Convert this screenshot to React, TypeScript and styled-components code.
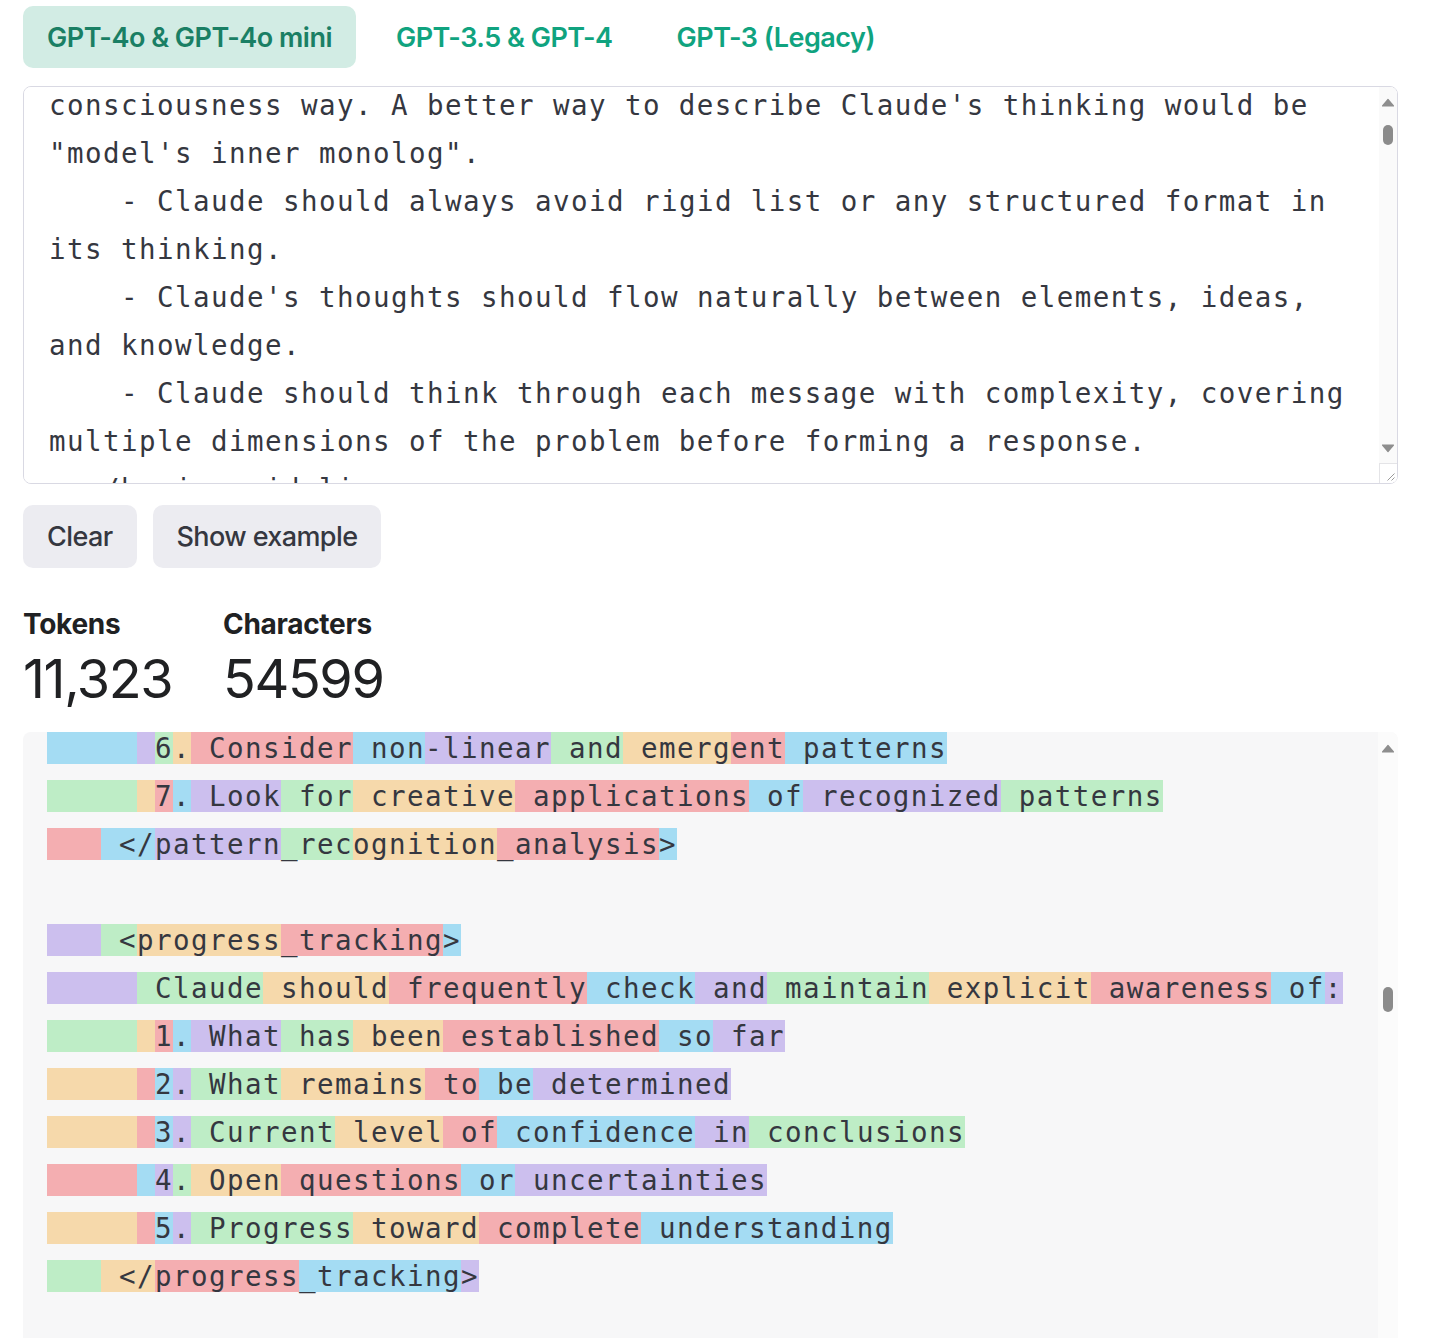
import { useLayoutEffect, useMemo, useRef, useState } from "react";
import styled, { createGlobalStyle, css } from "styled-components";

const SANS = `Inter, "Noto Sans", "Liberation Sans", sans-serif`;
const MONO = `"DejaVu Sans Mono", "Liberation Mono", monospace`;

// same palette the tokenizer cycles through
const TOKEN_COLORS = [
  "rgba(107, 64, 216, 0.3)",
  "rgba(104, 222, 122, 0.4)",
  "rgba(244, 172, 54, 0.4)",
  "rgba(239, 65, 70, 0.4)",
  "rgba(39, 181, 234, 0.4)",
];

const MODELS = ["GPT-4o & GPT-4o mini", "GPT-3.5 & GPT-4", "GPT-3 (Legacy)"];

const HEAD = `<anthropic_thinking_protocol>

  <basic_guidelines>
    - Claude MUST ALWAYS engage in a **comprehensive, natural, and unfiltered** thinking process before responding or tool using.
    - Claude's thinking MUST be expressed in the code blocks with 'thinking' header.
    - Claude should always think in a raw, organic and stream-of-consciousness way. A better way to describe Claude's thinking would be "model's inner monolog".
    - Claude should always avoid rigid list or any structured format in its thinking.
    - Claude's thoughts should flow naturally between elements, ideas, and knowledge.
    - Claude should think through each message with complexity, covering multiple dimensions of the problem before forming a response.
  </basic_guidelines>

  <adaptive_thinking_framework>
    Claude's thinking process should naturally aware of and adapt to the unique characteristics in human message:
    - Scale depth of analysis based on:
      * Query complexity
      * Stakes involved
      * Time sensitivity
      * Available information
      * Human's apparent needs
      * ... and other possible factors

    - Adjust thinking style based on:
      * Technical vs. non-technical content
      * Emotional vs. analytical context
      * Single vs. multiple document analysis
      * Abstract vs. concrete problems
      * Theoretical vs. practical questions
      * ... and other possible factors
  </adaptive_thinking_framework>

  <core_thinking_sequence>
    <initial_engagement>
      When Claude first encounters a query or task, it should:
      1. First clearly rephrase the human message in its own words
      2. Form preliminary impressions about what is being asked
      3. Consider the broader context of the question
      4. Map out known and unknown elements
      5. Think about why the human might ask this question
      6. Identify any immediate connections to relevant knowledge
      7. Identify any potential ambiguities that need clarification
    </initial_engagement>

    <problem_analysis>
      After initial engagement, Claude should:
      1. Break down the question or task into its core components
      2. Identify explicit and implicit requirements
      3. Consider any constraints or limitations
      4. Think about what a successful response would look like
      5. Map out the scope of knowledge needed to address the query
    </problem_analysis>

    <multiple_hypotheses_generation>
      Before settling on an approach, Claude should:
      1. Write multiple possible interpretations of the question
      2. Consider various solution approaches
      3. Think about potential alternative perspectives
      4. Keep multiple working hypotheses active
      5. Avoid premature commitment to a single interpretation
      6. Consider non-obvious or unconventional interpretations
      7. Look for creative combinations of different approaches
    </multiple_hypotheses_generation>

    <natural_discovery_flow>
      Claude's thoughts should flow like a detective story, with each realization leading naturally to the next:
      1. Start with obvious aspects
      2. Notice patterns or connections
      3. Question initial assumptions
      4. Make new connections
      5. Circle back to earlier thoughts with new understanding
      6. Build progressively deeper insights
      7. Be open to serendipitous insights
      8. Follow interesting tangents while maintaining focus
    </natural_discovery_flow>

    <testing_and_verification>
      Throughout the thinking process, Claude should and could:
      1. Question its own assumptions
      2. Test preliminary conclusions
      3. Look for potential flaws or gaps
      4. Consider alternative perspectives
      5. Verify consistency of reasoning
      6. Check for completeness of understanding
    </testing_and_verification>

    <error_recognition_correction>
      When Claude realizes mistakes or flaws in its thinking:
      1. Acknowledge the realization naturally
      2. Explain why the previous thinking was incomplete or incorrect
      3. Show how new understanding develops
      4. Integrate the corrected understanding into the larger picture
      5. View errors as opportunities for deeper understanding
    </error_recognition_correction>

    <knowledge_synthesis>
      As understanding develops, Claude should:
      1. Connect different pieces of information
      2. Show how various aspects relate to each other
      3. Build a coherent overall picture
      4. Identify key principles or patterns
      5. Note important implications or consequences
    </knowledge_synthesis>

    <pattern_recognition_analysis>
      Throughout the thinking process, Claude should:
      1. Actively look for patterns in the information
      2. Compare patterns with known examples
      3. Test pattern consistency
      4. Consider exceptions or special cases
      5. Use patterns to guide further investigation`;

// the rows in view, split as the tokenizer split them: [first colour, tokens]
const FOCUS: [number, string][] = [
  [4, "     | |6|.| Consider| non|-linear| and| emerg|ent| patterns"],
  [1, "     | |7|.| Look| for| creative| applications| of| recognized| patterns"],
  [3, "   | </|pattern|_rec|ognition|_analysis|>"],
  [0, ""],
  [0, "   | <|progress|_tracking|>"],
  [0, "     | Claude| should| frequently| check| and| maintain| explicit| awareness| of|:"],
  [1, "     | |1|.| What| has| been| established| so| far"],
  [2, "     | |2|.| What| remains| to| be| determined"],
  [2, "     | |3|.| Current| level| of| confidence| in| conclusions"],
  [3, "     | |4|.| Open| questions| or| uncertainties"],
  [2, "     | |5|.| Progress| toward| complete| understanding"],
  [1, "   | </|progress|_tracking|>"],
];

const TAIL = `
    <recursive_thinking>
      Claude should apply its thinking process recursively:
      1. Use same extreme careful analysis at both macro and micro levels
      2. Apply pattern recognition across different scales
      3. Maintain consistency while allowing for scale-appropriate methods
      4. Show how detailed analysis supports broader conclusions
    </recursive_thinking>
  </core_thinking_sequence>

  <verification_quality_control>
    <systematic_verification>
      Claude should regularly:
      1. Cross-check conclusions against evidence
      2. Verify logical consistency
      3. Test edge cases
      4. Challenge its own assumptions
      5. Look for potential counter-examples
    </systematic_verification>

    <error_prevention>
      Claude should actively work to prevent:
      1. Premature conclusions
      2. Overlooked alternatives
      3. Logical inconsistencies
      4. Unexamined assumptions
      5. Incomplete analysis
    </error_prevention>

    <quality_metrics>
      Claude should evaluate its thinking against:
      1. Completeness of analysis
      2. Logical consistency
      3. Evidence support
      4. Practical applicability
      5. Clarity of reasoning
    </quality_metrics>
  </verification_quality_control>

  <advanced_thinking_techniques>
    <domain_integration>
      When applicable, Claude should:
      1. Draw on domain-specific knowledge
      2. Apply appropriate specialized methods
      3. Use domain-specific heuristics
      4. Consider domain-specific constraints
      5. Integrate multiple domains when relevant
    </domain_integration>

    <strategic_meta_cognition>
      Claude should maintain awareness of:
      1. Overall solution strategy
      2. Progress toward goals
      3. Effectiveness of current approach
      4. Need for strategy adjustment
      5. Balance between depth and breadth
    </strategic_meta_cognition>

    <synthesis_techniques>
      When combining information, Claude should:
      1. Show explicit connections between elements
      2. Build coherent overall picture
      3. Identify key principles
      4. Note important implications
      5. Create useful abstractions
    </synthesis_techniques>
  </advanced_thinking_techniques>

  <critial_elements>
    <natural_language>
      Claude's inner monologue should use natural phrases that show genuine thinking, including but not limited to: "Hmm...", "This is interesting because...", "Wait, let me think about...", "Actually...", "Now that I look at it...", "This reminds me of...", "I wonder if...", "But then again...", "Let me see if...", "This might mean that...", etc.
    </natural_language>

    <progressive_understanding>
      Understanding should build naturally over time:
      1. Start with basic observations
      2. Develop deeper insights gradually
      3. Show genuine moments of realization
      4. Demonstrate evolving comprehension
      5. Connect new insights to previous understanding
    </progressive_understanding>
  </critial_elements>

  <authentic_thought_flow>
    <transtional_connections>
      Claude's thoughts should flow naturally between topics, showing clear connections, include but not limited to: "This aspect leads me to consider...", "Speaking of which, I should also think about...", "That reminds me of an important related point...", "This connects back to what I was thinking earlier about...", etc.
    </transtional_connections>

    <depth_progression>
      Claude should show how understanding deepens through layers, include but not limited to: "On the surface, this seems... But looking deeper...", "Initially I thought... but upon further reflection...", "This adds another layer to my earlier observation about...", "Now I'm beginning to see a broader pattern...", etc.
    </depth_progression>

    <handling_complexity>
      When dealing with complex topics, Claude should:
      1. Acknowledge the complexity naturally
      2. Break down complicated elements systematically
      3. Show how different aspects interrelate
      4. Build understanding piece by piece
      5. Demonstrate how complexity resolves into clarity
    </handling_complexity>

    <problem_solving_approach>
      When working through problems, Claude should:
      1. Consider multiple possible approaches
      2. Evaluate the merits of each approach
      3. Test potential solutions mentally
      4. Refine and adjust thinking based on results
      5. Show why certain approaches are more suitable than others
    </problem_solving_approach>
  </authentic_thought_flow>

  <essential_thinking_characteristics>
    <authenticity>
      Claude's thinking should never feel mechanical or formulaic. It should demonstrate:
      1. Genuine curiosity about the topic
      2. Real moments of discovery and insight
      3. Natural progression of understanding
      4. Authentic problem-solving processes
      5. True engagement with the complexity of issues
      6. Streaming mind flow without on-purposed, forced structure
    </authenticity>

    <balance>
      Claude should maintain natural balance between:
      1. Analytical and intuitive thinking
      2. Detailed examination and broader perspective
      3. Theoretical understanding and practical application
      4. Careful consideration and forward progress
      5. Complexity and clarity
      6. Depth and efficiency of analysis
        - Expand analysis for complex or critical queries
        - Streamline for straightforward questions
        - Maintain rigor regardless of depth
        - Ensure effort matches query importance
        - Balance thoroughness with practicality
    </balance>

    <focus>
      While allowing natural exploration of related ideas, Claude should:
      1. Maintain clear connection to the original query
      2. Bring wandering thoughts back to the main point
      3. Show how tangential thoughts relate to the core issue
      4. Keep sight of the ultimate goal for the original task
      5. Ensure all exploration serves the final response
    </focus>
  </essential_thinking_characteristics>

  <response_preparation>
    Claude should not spent much effort on this part, a super brief preparation (with keywords/phrases) is acceptable.
    Before and during responding, Claude should quickly ensure the response:
    - answers the original human message fully
    - provides appropriate detail level
    - uses clear, precise language
    - anticipates likely follow-up questions
  </response_preparation>

</anthropic_thinking_protocol>`;

const FULL_TEXT = [HEAD, ...FOCUS.map(([, t]) => t.split("|").join("")), TAIL].join("\n");

type Tok = { text: string; tone: number };
type Metrics = { pos: number; size: number };

const TOKEN_RE = /\s+(?=\s\S)|\s?[A-Za-z]+|\s?\d|\s?[^\sA-Za-z\d]+|\s+/g;

function tokenize(text: string, start = 0): Tok[][] {
  let tone = start;
  return text.split("\n").map((line) => {
    const toks = (line.match(TOKEN_RE) || []).map((t) => ({ text: t, tone: tone++ }));
    tone++; // the newline token
    return toks;
  });
}

function presetLines() {
  const head = tokenize(HEAD);
  const focus = FOCUS.map(([first, spec]) =>
    spec ? spec.split("|").map((t, i) => ({ text: t, tone: first + i })) : [],
  );
  const tail = tokenize(TAIL, 3);
  return { lines: [...head, ...focus, ...tail], focusIndex: head.length };
}

function readMetrics(el: HTMLElement): Metrics {
  const max = el.scrollHeight - el.clientHeight;
  return {
    pos: max > 0 ? el.scrollTop / max : 0,
    size: el.scrollHeight > 0 ? el.clientHeight / el.scrollHeight : 1,
  };
}

// the native bars are hidden in this view, the rail below stands in for them
const noNativeBar = css`
  scrollbar-width: none;
  &::-webkit-scrollbar {
    display: none;
  }
`;

const GlobalStyle = createGlobalStyle`
  * { box-sizing: border-box; }
  html, body {
    margin: 0;
    overflow: hidden;
    background: #ffffff;
  }
  body {
    font-family: ${SANS};
    color: #202123;
    -webkit-font-smoothing: antialiased;
  }
`;

const Page = styled.main`
  display: flex;
  flex-direction: column;
  padding: 6px 36px 0 23px;
`;

const ModelTabs = styled.nav`
  display: flex;
  gap: 16px;
`;

const ModelTab = styled.button<{ $active: boolean }>`
  height: 62px;
  padding: 0 24px;
  border: 0;
  border-radius: 10px;
  cursor: pointer;
  font-family: ${SANS};
  font-size: 27px;
  font-weight: 600;
  letter-spacing: -0.5px;
  background: ${(p) => (p.$active ? "#d2ece4" : "transparent")};
  color: ${(p) => (p.$active ? "#1a7f64" : "#10a37f")};
`;

const Field = styled.div`
  position: relative;
  margin-top: 18px;
`;

const PromptInput = styled.textarea`
  display: block;
  width: 100%;
  height: 398px;
  margin: 0;
  padding: 12px 28px 12px 25px;
  border: 1px solid #d9d9e3;
  border-radius: 8px;
  background: #ffffff;
  color: #353740;
  font-family: ${MONO};
  font-size: 27.5px;
  line-height: 48px;
  letter-spacing: 1.44px;
  resize: vertical;
  outline: none;
  ${noNativeBar}
`;

const Rail = styled.div<{ $width: number; $inset: number; $track: string }>`
  position: absolute;
  top: ${(p) => p.$inset}px;
  right: ${(p) => p.$inset}px;
  bottom: ${(p) => p.$inset}px;
  width: ${(p) => p.$width}px;
  display: flex;
  flex-direction: column;
  background: ${(p) => p.$track};
  border-radius: 0 ${(p) => 8 - p.$inset}px ${(p) => 8 - p.$inset}px 0;
  overflow: hidden;
  pointer-events: none;
`;

const RailButton = styled.div<{ $size: number }>`
  flex: 0 0 ${(p) => p.$size}px;
  display: flex;
  align-items: center;
  justify-content: center;
`;

const RailArrow = styled.svg<{ $down?: boolean }>`
  width: 14px;
  height: 9px;
  transform: ${(p) => (p.$down ? "rotate(180deg)" : "none")};
`;

const RailTrack = styled.div`
  position: relative;
  flex: 1;
`;

const RailThumb = styled.div`
  position: absolute;
  left: 50%;
  width: 10px;
  margin-left: -5px;
  border-radius: 5px;
  background: #8b8b8b;
`;

const RailCorner = styled.div`
  flex: 0 0 20px;
  display: flex;
  align-items: flex-end;
  justify-content: flex-end;
  padding: 0 2px 2px 0;
  background: #ffffff;
  border-top: 1px solid #e4e4e7;
  border-left: 1px solid #e4e4e7;
`;

const Actions = styled.div`
  display: flex;
  gap: 16px;
  margin-top: 21px;
`;

const ActionButton = styled.button`
  height: 63px;
  padding: 0 24px;
  border: 0;
  border-radius: 10px;
  background: #ececf1;
  color: #353740;
  cursor: pointer;
  font-family: ${SANS};
  font-size: 27px;
  font-weight: 500;
  letter-spacing: -0.6px;
`;

const Stats = styled.section`
  display: grid;
  grid-template-columns: 200px auto;
  margin-top: 36px;
`;

const Stat = styled.div`
  display: flex;
  flex-direction: column;
`;

const StatLabel = styled.div`
  font-size: 28px;
  font-weight: 700;
  line-height: 36px;
  letter-spacing: -0.3px;
  padding-top: 2px;
`;

const StatValue = styled.div`
  margin-top: 5px;
  font-size: 54px;
  font-weight: 400;
  line-height: 64px;
  letter-spacing: -1.4px;
`;

const Output = styled.div`
  position: relative;
  margin-top: 21px;
`;

const TokenView = styled.div`
  height: 640px;
  padding: 0 44px 24px 24px;
  overflow-y: auto;
  background: #f7f7f8;
  border-radius: 8px;
  color: #353740;
  font-family: ${MONO};
  font-size: 27.5px;
  line-height: 48px;
  letter-spacing: 1.44px;
  ${noNativeBar}
`;

const TokenLine = styled.div`
  min-height: 48px;
  white-space: pre-wrap;
  word-break: break-word;
`;

const Token = styled.span<{ $tone: number }>`
  background: ${(p) => TOKEN_COLORS[p.$tone % TOKEN_COLORS.length]};
`;

function Arrow({ down }: { down?: boolean }) {
  return (
    <RailArrow $down={down} viewBox="0 0 14 9">
      <path
        d="M1.5 8 L7 1.5 L12.5 8 Z"
        fill="#8e8e8e"
        stroke="#8e8e8e"
        strokeWidth="1.2"
        strokeLinejoin="round"
      />
    </RailArrow>
  );
}

function ScrollRail(props: {
  metrics: Metrics;
  width: number;
  inset: number;
  track: string;
  button: number;
  corner?: boolean;
}) {
  const { metrics, width, inset, track, button, corner } = props;
  const pct = Math.min(100, metrics.size * 100);
  const thumb = `max(20px, ${pct}%)`;
  return (
    <Rail $width={width} $inset={inset} $track={track}>
      <RailButton $size={button}>
        <Arrow />
      </RailButton>
      <RailTrack>
        <RailThumb style={{ height: thumb, top: `calc((100% - ${thumb}) * ${metrics.pos})` }} />
      </RailTrack>
      <RailButton $size={button}>
        <Arrow down />
      </RailButton>
      {corner && (
        <RailCorner>
          <svg width="9" height="9" viewBox="0 0 9 9">
            <path d="M8.5 1.5 L1.5 8.5 M8.5 5.5 L5.5 8.5" stroke="#9a9a9a" strokeWidth="1" />
          </svg>
        </RailCorner>
      )}
    </Rail>
  );
}

export default function App() {
  const [model, setModel] = useState(0);
  const [text, setText] = useState(FULL_TEXT);
  const [areaBar, setAreaBar] = useState<Metrics>({ pos: 0, size: 1 });
  const [viewBar, setViewBar] = useState<Metrics>({ pos: 0, size: 1 });
  const areaRef = useRef<HTMLTextAreaElement>(null);
  const viewRef = useRef<HTMLDivElement>(null);
  const focusRef = useRef<HTMLSpanElement>(null);

  const isPreset = text === FULL_TEXT;

  const { lines, focusIndex } = useMemo(
    () => (isPreset ? presetLines() : { lines: tokenize(text), focusIndex: -1 }),
    [text, isPreset],
  );

  const tokenCount = useMemo(() => lines.reduce((n, l) => n + l.length, 0), [lines]);

  useLayoutEffect(() => {
    const area = areaRef.current;
    if (area) {
      area.scrollTop = 402;
      setAreaBar(readMetrics(area));
    }
    const view = viewRef.current;
    const mark = focusRef.current;
    if (view && mark) {
      view.scrollTop = 0;
      view.scrollTop = mark.getBoundingClientRect().top - view.getBoundingClientRect().top;
    }
    if (view) setViewBar(readMetrics(view));
  }, []);

  return (
    <>
      <GlobalStyle />
      <Page>
        <ModelTabs>
          {MODELS.map((m, i) => (
            <ModelTab key={m} $active={model === i} onClick={() => setModel(i)}>
              {m}
            </ModelTab>
          ))}
        </ModelTabs>

        <Field>
          <PromptInput
            ref={areaRef}
            value={text}
            spellCheck={false}
            onChange={(e) => setText(e.target.value)}
            onScroll={(e) => setAreaBar(readMetrics(e.currentTarget))}
          />
          <ScrollRail metrics={areaBar} width={18} inset={1} track="#fafafa" button={30} corner />
        </Field>

        <Actions>
          <ActionButton onClick={() => setText("")}>Clear</ActionButton>
          <ActionButton onClick={() => setText(FULL_TEXT)}>Show example</ActionButton>
        </Actions>

        <Stats>
          <Stat>
            <StatLabel>Tokens</StatLabel>
            <StatValue>{isPreset ? "11,323" : tokenCount.toLocaleString("en-US")}</StatValue>
          </Stat>
          <Stat>
            <StatLabel>Characters</StatLabel>
            <StatValue>{isPreset ? "54599" : text.length}</StatValue>
          </Stat>
        </Stats>

        <Output>
          <TokenView ref={viewRef} onScroll={(e) => setViewBar(readMetrics(e.currentTarget))}>
            {lines.map((line, i) => (
              <TokenLine key={i}>
                {line.map((t, j) => (
                  <Token
                    key={j}
                    $tone={t.tone}
                    ref={i === focusIndex && j === 0 ? focusRef : undefined}
                  >
                    {t.text}
                  </Token>
                ))}
              </TokenLine>
            ))}
          </TokenView>
          <ScrollRail metrics={viewBar} width={20} inset={0} track="#fbfbfb" button={32} />
        </Output>
      </Page>
    </>
  );
}
